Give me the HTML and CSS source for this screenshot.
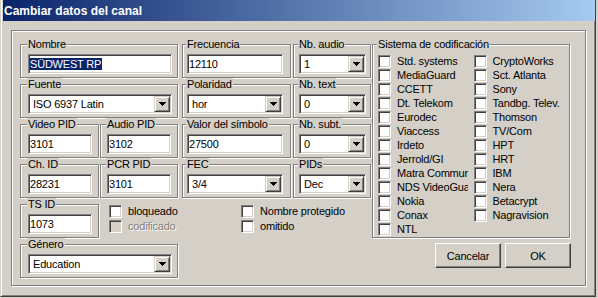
FILE: index.html
```html
<!DOCTYPE html>
<html lang="es">
<head>
<meta charset="utf-8">
<title>Cambiar datos del canal</title>
<link rel="stylesheet" href="styles.css">
</head>
<body>
<div class="window">
  <div class="titlebar">Cambiar datos del canal</div>
  <div class="client">
    <div class="frame">
      <div class="fields">
        <div class="group pa c-ab r1"><span class="lbl">Nombre</span><div class="edit w-wide"><span class="sel">SÜDWEST RP</span></div></div>
        <div class="group pc c-c r1"><span class="lbl">Frecuencia</span><div class="edit w-c">12110</div></div>
        <div class="group pd c-d r1"><span class="lbl">Nb. audio</span><div class="combo w-d"><span class="ctext">1</span><span class="cbtn"><svg width="7" height="4" viewBox="0 0 7 4"><rect x="0" y="0" width="7" height="1"/><rect x="1" y="1" width="5" height="1"/><rect x="2" y="2" width="3" height="1"/><rect x="3" y="3" width="1" height="1"/></svg></span></div></div>

        <div class="group pa c-ab r2"><span class="lbl">Fuente</span><div class="combo w-wide"><span class="ctext">ISO 6937 Latin</span><span class="cbtn"><svg width="7" height="4" viewBox="0 0 7 4"><rect x="0" y="0" width="7" height="1"/><rect x="1" y="1" width="5" height="1"/><rect x="2" y="2" width="3" height="1"/><rect x="3" y="3" width="1" height="1"/></svg></span></div></div>
        <div class="group pc c-c r2"><span class="lbl">Polaridad</span><div class="combo w-c"><span class="ctext">hor</span><span class="cbtn"><svg width="7" height="4" viewBox="0 0 7 4"><rect x="0" y="0" width="7" height="1"/><rect x="1" y="1" width="5" height="1"/><rect x="2" y="2" width="3" height="1"/><rect x="3" y="3" width="1" height="1"/></svg></span></div></div>
        <div class="group pd c-d r2"><span class="lbl">Nb. text</span><div class="combo w-d"><span class="ctext">0</span><span class="cbtn"><svg width="7" height="4" viewBox="0 0 7 4"><rect x="0" y="0" width="7" height="1"/><rect x="1" y="1" width="5" height="1"/><rect x="2" y="2" width="3" height="1"/><rect x="3" y="3" width="1" height="1"/></svg></span></div></div>

        <div class="group pa c-a r3"><span class="lbl">Video PID</span><div class="edit w-pid">3101</div></div>
        <div class="group pb c-b r3"><span class="lbl">Audio PID</span><div class="edit w-pid">3102</div></div>
        <div class="group pc c-c r3"><span class="lbl">Valor del símbolo</span><div class="edit w-c">27500</div></div>
        <div class="group pd c-d r3"><span class="lbl">Nb. subt.</span><div class="combo w-d"><span class="ctext">0</span><span class="cbtn"><svg width="7" height="4" viewBox="0 0 7 4"><rect x="0" y="0" width="7" height="1"/><rect x="1" y="1" width="5" height="1"/><rect x="2" y="2" width="3" height="1"/><rect x="3" y="3" width="1" height="1"/></svg></span></div></div>

        <div class="group pa c-a r4"><span class="lbl">Ch. ID</span><div class="edit w-pid">28231</div></div>
        <div class="group pb c-b r4"><span class="lbl">PCR PID</span><div class="edit w-pid">3101</div></div>
        <div class="group pc c-c r4"><span class="lbl">FEC</span><div class="combo w-c"><span class="ctext">3/4</span><span class="cbtn"><svg width="7" height="4" viewBox="0 0 7 4"><rect x="0" y="0" width="7" height="1"/><rect x="1" y="1" width="5" height="1"/><rect x="2" y="2" width="3" height="1"/><rect x="3" y="3" width="1" height="1"/></svg></span></div></div>
        <div class="group pd c-d r4"><span class="lbl">PIDs</span><div class="combo w-d"><span class="ctext">Dec</span><span class="cbtn"><svg width="7" height="4" viewBox="0 0 7 4"><rect x="0" y="0" width="7" height="1"/><rect x="1" y="1" width="5" height="1"/><rect x="2" y="2" width="3" height="1"/><rect x="3" y="3" width="1" height="1"/></svg></span></div></div>

        <div class="group pa c-a r5"><span class="lbl">TS ID</span><div class="edit w-pid">1073</div></div>
        <div class="checks checks-b c-b r5">
          <div class="chk tall"><span class="cb"></span><span class="ct">bloqueado</span></div>
          <div class="chk tall dis"><span class="cb"></span><span class="ct">codificado</span></div>
        </div>
        <div class="checks checks-c c-cd r5">
          <div class="chk tall"><span class="cb"></span><span class="ct">Nombre protegido</span></div>
          <div class="chk tall"><span class="cb"></span><span class="ct">omitido</span></div>
        </div>

        <div class="group pa c-ab r6"><span class="lbl">Género</span><div class="combo w-wide"><span class="ctext">Education</span><span class="cbtn"><svg width="7" height="4" viewBox="0 0 7 4"><rect x="0" y="0" width="7" height="1"/><rect x="1" y="1" width="5" height="1"/><rect x="2" y="2" width="3" height="1"/><rect x="3" y="3" width="1" height="1"/></svg></span></div></div>
      </div>

      <div class="side">
        <div class="group sistema"><span class="lbl">Sistema de codificación</span>
          <div class="scol">
            <div class="chk"><span class="cb"></span><span class="ct">Std. systems</span></div>
            <div class="chk"><span class="cb"></span><span class="ct">MediaGuard</span></div>
            <div class="chk"><span class="cb"></span><span class="ct">CCETT</span></div>
            <div class="chk"><span class="cb"></span><span class="ct">Dt. Telekom</span></div>
            <div class="chk"><span class="cb"></span><span class="ct">Eurodec</span></div>
            <div class="chk"><span class="cb"></span><span class="ct">Viaccess</span></div>
            <div class="chk"><span class="cb"></span><span class="ct">Irdeto</span></div>
            <div class="chk"><span class="cb"></span><span class="ct">Jerrold/GI</span></div>
            <div class="chk"><span class="cb"></span><span class="ct clip">Matra Commun</span></div>
            <div class="chk"><span class="cb"></span><span class="ct clip">NDS VideoGua</span></div>
            <div class="chk"><span class="cb"></span><span class="ct">Nokia</span></div>
            <div class="chk"><span class="cb"></span><span class="ct">Conax</span></div>
            <div class="chk"><span class="cb"></span><span class="ct">NTL</span></div>
          </div>
          <div class="scol">
            <div class="chk"><span class="cb"></span><span class="ct">CryptoWorks</span></div>
            <div class="chk"><span class="cb"></span><span class="ct">Sct. Atlanta</span></div>
            <div class="chk"><span class="cb"></span><span class="ct">Sony</span></div>
            <div class="chk"><span class="cb"></span><span class="ct">Tandbg. Telev.</span></div>
            <div class="chk"><span class="cb"></span><span class="ct">Thomson</span></div>
            <div class="chk"><span class="cb"></span><span class="ct">TV/Com</span></div>
            <div class="chk"><span class="cb"></span><span class="ct">HPT</span></div>
            <div class="chk"><span class="cb"></span><span class="ct">HRT</span></div>
            <div class="chk"><span class="cb"></span><span class="ct">IBM</span></div>
            <div class="chk"><span class="cb"></span><span class="ct">Nera</span></div>
            <div class="chk"><span class="cb"></span><span class="ct">Betacrypt</span></div>
            <div class="chk"><span class="cb"></span><span class="ct">Nagravision</span></div>
          </div>
        </div>
        <div class="buttons">
          <button class="btn" type="button">Cancelar</button>
          <button class="btn" type="button">OK</button>
        </div>
      </div>
    </div>
  </div>
</div>
</body>
</html>
```

FILE: styles.css
```css
* { box-sizing: border-box; }
html, body { margin: 0; padding: 0; }
body {
  background: #d4d0c8;
  font-family: "Liberation Sans", Arial, sans-serif;
  font-size: 11px;
  letter-spacing: -0.2px;
  color: #000;
}

.window {
  width: 596px;
  height: 297px;
  border-left: 1px solid #d4d0c8;
  border-right: 1px solid #404040;
  border-bottom: 1px solid #404040;
  box-shadow: inset 1px 0 0 #fff, inset -1px -1px 0 #808080;
  padding: 0 0 0 2px;
  display: flex;
  flex-direction: column;
}

.titlebar {
  height: 21px;
  padding: 2px 0 0 1px;
  line-height: 19px;
  background: linear-gradient(to right, #0a246a, #a6caf0);
  color: #fff;
  font-weight: bold;
  font-size: 12px;
  letter-spacing: 0;
  white-space: nowrap;
}

.client { padding: 9px 0 0 8px; }

.frame {
  width: 575px;
  height: 256px;
  border: 1px solid #808080;
  box-shadow: inset 1px 1px 0 #fff, 1px 1px 0 #fff;
  padding: 13px 0 0 8px;
  display: flex;
  align-items: flex-start;
}

.fields {
  display: grid;
  grid-template-columns: 79px 1px 78px 4px 109px 2px 78px;
  grid-template-rows: repeat(6, 34px);
  row-gap: 6px;
}
.c-a { grid-column: 1; }
.c-b { grid-column: 3; }
.c-ab { grid-column: 1 / 4; }
.c-c { grid-column: 5; }
.c-d { grid-column: 7; }
.c-cd { grid-column: 5 / 8; }
.r1 { grid-row: 1; }
.r2 { grid-row: 2; }
.r3 { grid-row: 3; }
.r4 { grid-row: 4; }
.r5 { grid-row: 5; }
.r6 { grid-row: 6; }

.group {
  position: relative;
  border: 1px solid #808080;
  box-shadow: inset 1px 1px 0 #fff, 1px 1px 0 #fff;
  padding: 9px 0 0 var(--pl);
}
.pa { --pl: 7px; }
.pb { --pl: 6px; }
.pc { --pl: 4px; }
.pd { --pl: 5px; }

.lbl {
  position: absolute;
  top: -7px;
  left: calc(var(--pl) - 1px);
  padding: 0 1px;
  background: #d4d0c8;
  line-height: 13px;
  white-space: nowrap;
}

.edit, .combo {
  height: 20px;
  background: #fff;
  border: 1px solid;
  border-color: #808080 #fff #fff #808080;
  box-shadow: inset 1px 1px 0 #404040, inset -1px -1px 0 #d4d0c8;
  white-space: nowrap;
  overflow: hidden;
}
.edit {
  padding: 0 0 0 1px;
  line-height: 18px;
}
.sel { background: #0a246a; color: #fff; padding: 0 1px 0 0; }

.combo {
  display: flex;
  padding: 1px;
}
.ctext {
  flex: 1;
  padding-left: 3px;
  line-height: 16px;
  overflow: hidden;
}
.cbtn {
  flex: none;
  width: 16px;
  height: 16px;
  background: #d4d0c8;
  border: 1px solid;
  border-color: #d4d0c8 #404040 #404040 #d4d0c8;
  box-shadow: inset 1px 1px 0 #fff, inset -1px -1px 0 #808080;
  display: flex;
  align-items: center;
  justify-content: center;
}
.cbtn svg { display: block; fill: #000; }

.w-wide { width: 144px; }
.w-pid { width: 64px; }
.w-c { width: 96px; }
.w-d { width: 67px; }

.checks { display: flex; flex-direction: column; padding-top: 1px; }
.checks-b { padding-left: 9px; }
.checks-c { padding-left: 59px; }

.chk {
  display: flex;
  align-items: flex-start;
  gap: 6px;
  height: 14px;
  white-space: nowrap;
}
.chk.tall { height: 15px; }
.cb {
  flex: none;
  width: 13px;
  height: 13px;
  background: #fff;
  border: 1px solid;
  border-color: #808080 #fff #fff #808080;
  box-shadow: inset 1px 1px 0 #404040, inset -1px -1px 0 #d4d0c8;
}
.ct { line-height: 12px; }
.clip { display: block; width: 71px; overflow: hidden; }
.dis .cb { background: #d4d0c8; }
.dis .ct { color: #808080; text-shadow: 1px 1px 0 #fff; }

.side {
  margin-left: 1px;
  width: 199px;
  display: flex;
  flex-direction: column;
}
.sistema {
  --pl: 5px;
  width: 198px;
  height: 194px;
  padding: 10px 0 0 5px;
  display: flex;
}
.scol { width: 97px; display: flex; flex-direction: column; }

.buttons {
  margin-top: 5px;
  display: flex;
  justify-content: flex-end;
  gap: 4px;
}
.btn {
  width: 66px;
  height: 25px;
  padding: 0;
  margin: 0;
  background: #d4d0c8;
  border: 1px solid;
  border-color: #fff #404040 #404040 #fff;
  box-shadow: inset -1px -1px 0 #808080;
  border-radius: 0;
  font-family: inherit;
  font-size: 11px;
  letter-spacing: -0.2px;
  color: #000;
}
```
